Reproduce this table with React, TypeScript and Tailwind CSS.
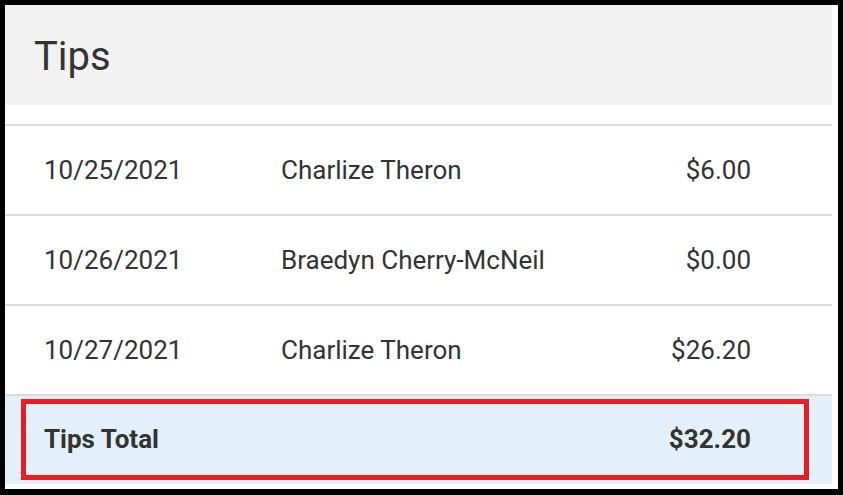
const rows = [
  { date: '10/25/2021', name: 'Charlize Theron', amount: '$6.00' },
  { date: '10/26/2021', name: 'Braedyn Cherry-McNeil', amount: '$0.00' },
  { date: '10/27/2021', name: 'Charlize Theron', amount: '$26.20' },
];

const App = () => {
  return (
    <div
      className="w-[843px] h-[495px] bg-black pt-[5px] pl-[5px] pr-[5px] pb-[6px]"
      style={{ fontFamily: 'Roboto, "Liberation Sans", sans-serif' }}
    >
      <div className="h-full bg-white pr-[6px] pb-[5px]">
        <div className="flex flex-col h-full">
          {/* header */}
          <div className="h-[100px] bg-[#f2f2f2] flex items-center pl-[29px] pt-[4px]">
            <h1 className="text-[40px] leading-none text-[#333333]">Tips</h1>
          </div>

          <div className="h-[19px]" />

          {/* rows */}
          {rows.map((row, i) => (
            <div
              key={i}
              className="h-[90px] border-t-2 border-[#dcdcdc] flex items-center pl-[39px] pr-[81px] text-[26px] text-[#333333]"
            >
              <span className="w-[237px]">{row.date}</span>
              <span className="flex-1">{row.name}</span>
              <span className="text-right">{row.amount}</span>
            </div>
          ))}

          {/* total */}
          <div className="flex-1 border-t-2 border-[#dcdcdc] bg-[#e3f0fa] pt-[3px] pl-[16px] pr-[23px] pb-[4px]">
            <div className="h-full border-[5px] border-[#ed1c24] flex items-center justify-between pl-[18px] pr-[53px] text-[26px] font-bold text-[#333333]">
              <span>Tips Total</span>
              <span>$32.20</span>
            </div>
          </div>
        </div>
      </div>
    </div>
  );
};

export default App;
